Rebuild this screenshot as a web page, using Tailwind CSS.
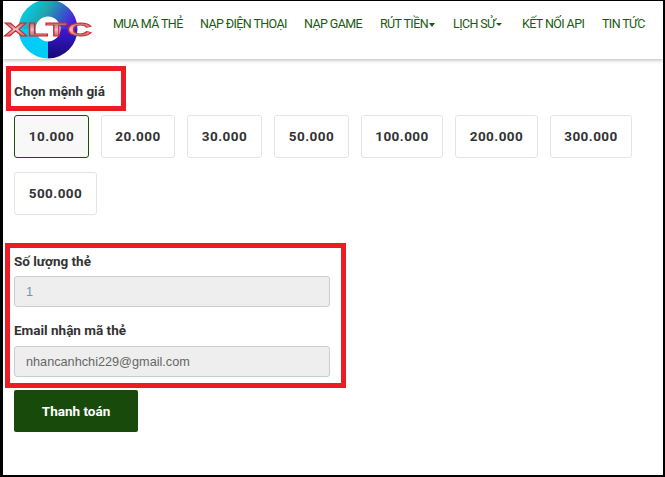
<!DOCTYPE html>
<html lang="vi">
<head>
<meta charset="UTF-8">
<title>Chọn mệnh giá</title>
<script src="https://cdn.jsdelivr.net/npm/@tailwindcss/browser@4"></script>
</head>
<body class="bg-black overflow-hidden font-['Roboto',sans-serif]">
<div class="relative w-[665px] h-[477px] bg-white border-l-[3px] border-r-[2px] border-t-[1px] border-b-[2px] border-black overflow-hidden">

  <header class="h-[58px] flex items-center bg-white shadow-[0_1px_4px_rgba(0,0,0,0.3)]">
    <div class="w-[110px] shrink-0">
      <svg class="blur-[0.4px]" width="96" height="60" viewBox="0 0 96 60" xmlns="http://www.w3.org/2000/svg">
        <defs>
          <linearGradient id="ringTop" x1="0" y1="0.3" x2="1" y2="0.6">
            <stop offset="0" stop-color="#00d8f2"/>
            <stop offset="0.45" stop-color="#1fa6ad"/>
            <stop offset="1" stop-color="#4a18e0"/>
          </linearGradient>
          <linearGradient id="ringRight" x1="0" y1="0" x2="0" y2="1">
            <stop offset="0" stop-color="#3d18d8"/>
            <stop offset="1" stop-color="#160a70"/>
          </linearGradient>
          <linearGradient id="logoText" x1="0" y1="0" x2="0" y2="1">
            <stop offset="0" stop-color="#8a3a40"/>
            <stop offset="0.5" stop-color="#e8c4c4"/>
            <stop offset="1" stop-color="#a03038"/>
          </linearGradient>
        </defs>
        <g transform="translate(-1.500 0)">
          <path d="M17 29a29.500 29.500 0 0 1 59 0h-17a12.500 12.500 0 0 0-25 0z" fill="url(#ringTop)"/>
          <path d="M17 29a29.500 29.500 0 0 0 29.500 29.500v-17a12.500 12.500 0 0 1-12.500-12.500z" fill="#00ccf5"/>
          <path d="M76 29a29.500 29.500 0 0 1-29.500 29.500v-17a12.500 12.500 0 0 0 12.500-12.500z" fill="url(#ringRight)"/>
        </g>
        <text x="1" y="36" textLength="88" lengthAdjust="spacingAndGlyphs" font-family="Liberation Sans, sans-serif" font-weight="700" font-size="19" fill="url(#logoText)" stroke="#d8232f" stroke-width="0.8">XLTC</text>
      </svg>
    </div>
    <nav class="flex items-center pb-[11px] text-[12.500px] tracking-[-0.6px] text-[#1b5a12] whitespace-nowrap">
      <a class="w-[87px]">MUA MÃ THẺ</a>
      <a class="w-[104px]">NẠP ĐIỆN THOẠI</a>
      <a class="w-[76px]">NẠP GAME</a>
      <a class="w-[73px] flex items-center">RÚT TIỀN<span class="ml-[1px] w-0 h-0 border-x-[3.500px] border-x-transparent border-t-[4px] border-t-[#1b5a12]"></span></a>
      <a class="w-[69px] flex items-center">LỊCH SỬ<span class="ml-[1px] w-0 h-0 border-x-[3px] border-x-transparent border-t-[3px] border-t-[#1b5a12]"></span></a>
      <a class="w-[80px]">KẾT NỐI API</a>
      <a>TIN TỨC</a>
    </nav>
  </header>

  <main class="pl-[11px]">
    <p class="mt-[23px] text-[13.500px] leading-[18px] font-bold text-[#333]">Chọn mệnh giá</p>
    <div class="mt-[15px] flex flex-wrap gap-x-[12px] gap-y-[14px] w-[640px] text-[13.500px] font-bold tracking-[0.45px] text-[#333]">
      <button class="w-[75px] h-[43px] rounded-[3px] border border-[#1b4f0c] bg-[#f8f8f8]">10.000</button>
      <button class="w-[74px] h-[43px] rounded-[3px] border border-[#e4e4e4]">20.000</button>
      <button class="w-[75px] h-[43px] rounded-[3px] border border-[#e4e4e4]">30.000</button>
      <button class="w-[75px] h-[43px] rounded-[3px] border border-[#e4e4e4]">50.000</button>
      <button class="w-[82px] h-[43px] rounded-[3px] border border-[#e4e4e4]">100.000</button>
      <button class="w-[83px] h-[43px] rounded-[3px] border border-[#e4e4e4]">200.000</button>
      <button class="w-[82px] h-[43px] rounded-[3px] border border-[#e4e4e4]">300.000</button>
      <button class="w-[83px] h-[43px] rounded-[3px] border border-[#e4e4e4]">500.000</button>
    </div>
    <label class="block mt-[37px] text-[13.500px] leading-[18px] font-bold text-[#333]">Số lượng thẻ</label>
    <input readonly value="1" class="block mt-[6px] w-[316px] h-[31px] px-[11px] rounded-[3px] border border-[#ccc] bg-[#eee] font-['Liberation_Sans',sans-serif] text-[12.700px] text-[#6f93b5]">
    <label class="block mt-[14px] text-[13.500px] leading-[18px] font-bold text-[#333]">Email nhận mã thẻ</label>
    <input readonly value="nhancanhchi229@gmail.com" class="block mt-[7px] w-[316px] h-[31px] px-[11px] rounded-[3px] border border-[#ccc] bg-[#eee] font-['Liberation_Sans',sans-serif] text-[12.700px] text-[#666]">
    <button class="block mt-[13px] w-[124px] h-[42px] rounded-[2px] bg-[#174a0b] text-[13.500px] font-bold text-white">Thanh toán</button>
  </main>

  <div class="absolute left-[3px] top-[65px] w-[120px] h-[45px] border-[5px] border-[#ed1c24]"></div>
  <div class="absolute left-[2px] top-[242px] w-[341px] h-[145px] border-[5px] border-[#ed1c24]"></div>
</div>
</body>
</html>
